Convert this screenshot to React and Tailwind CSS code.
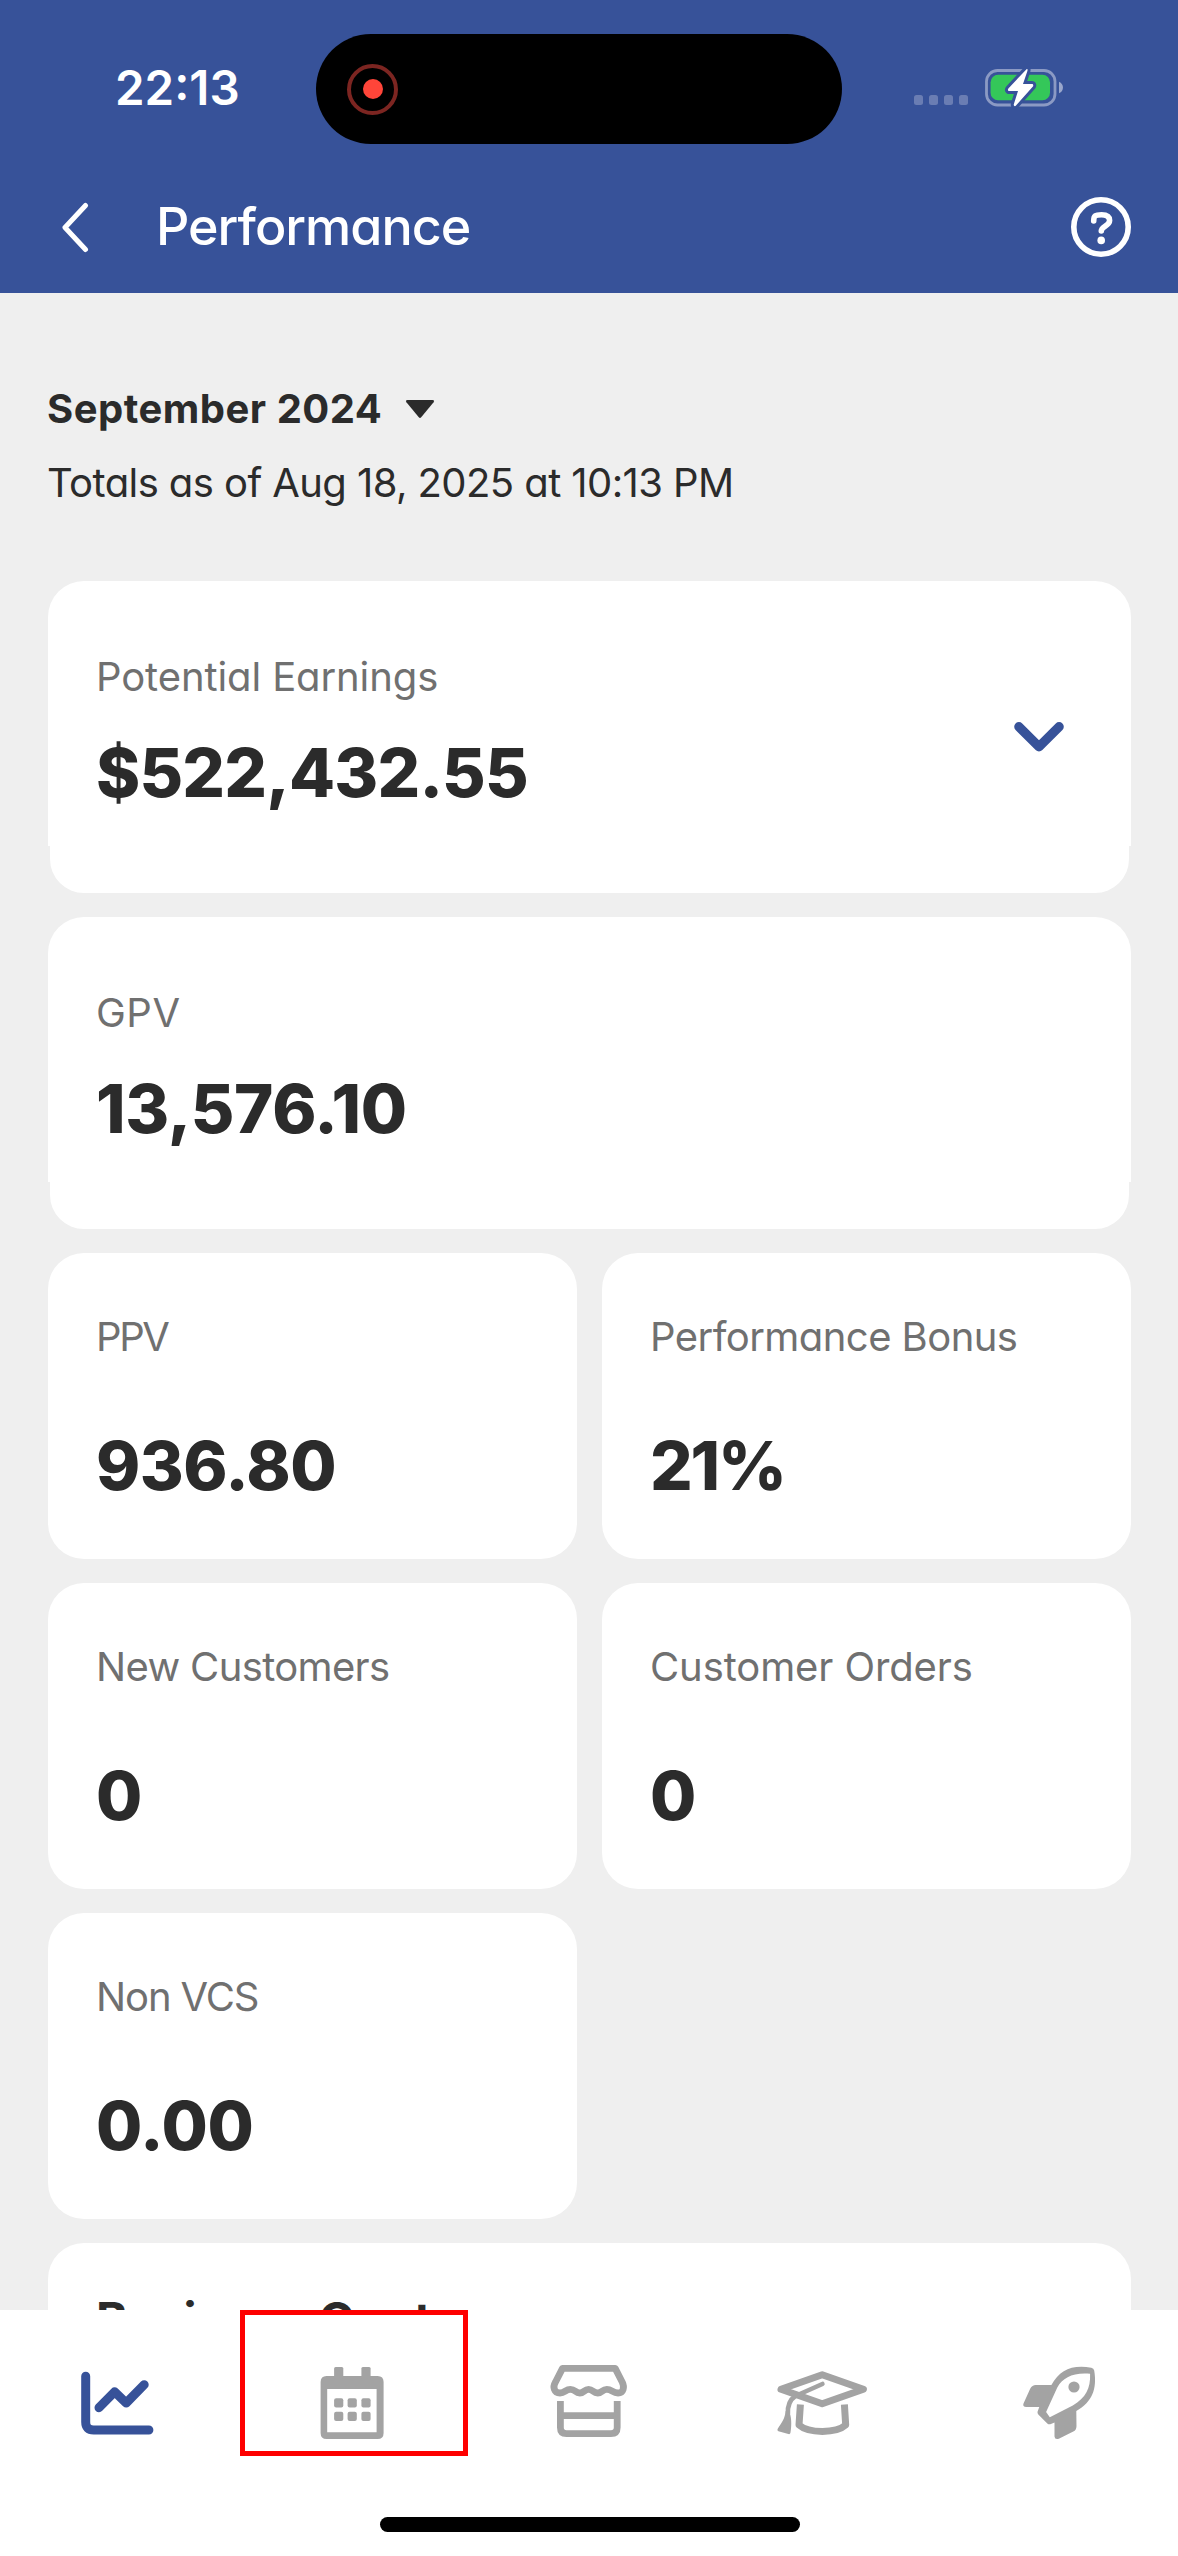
import React from "react";

function StatusBar() {
  return (
    <div className="relative h-[160px]">
      <span className="absolute left-[115px] top-[58px] text-[47.5px] leading-[60px] font-semibold">22:13</span>
      <div className="absolute left-[316px] top-[34px] flex h-[110px] w-[526px] items-center rounded-full bg-black pl-[31px]">
        <div className="flex h-[51px] w-[51px] items-center justify-center rounded-full border-4 border-[#7c2521]">
          <div className="h-[20px] w-[20px] rounded-full bg-[#ff4539]" />
        </div>
      </div>
      <div className="absolute left-[914px] top-[95px] flex gap-[5.9px]">
        {[0, 1, 2, 3].map((i) => (
          <div key={i} className="h-[10px] w-[9px] rounded-[2.5px] bg-[#6a7db3]" />
        ))}
      </div>
      <svg className="absolute left-[980px] top-[60px] h-[56px] w-[90px]" viewBox="980 60 90 56" fill="none">
        <rect x="986.5" y="70.5" width="68.5" height="34.5" rx="11" stroke="#8b9ac4" strokeWidth="2.8" />
        <rect x="990.6" y="74.8" width="59.4" height="25.4" rx="7.5" fill="#34c759" />
        <path d="M1059 81.7C1064.3 84 1064.3 91 1059 93.3Z" fill="#9aa7cc" />
        <path
          d="M1026.3 69.4L1008.6 88.2C1007.4 89.5 1007.8 91 1009.4 91H1018L1013.8 104.2C1013.4 106 1015 106.8 1016 105.6L1032.7 86.8C1033.8 85.4 1033.2 84.1 1031.8 84.1H1023L1027.4 71C1028 69 1027.2 68.4 1026.3 69.4Z"
          fill="#fff"
          stroke="#375299"
          strokeWidth="6"
          paintOrder="stroke"
          strokeLinejoin="round"
        />
      </svg>
    </div>
  );
}

function TitleBar() {
  return (
    <div className="flex h-[133px] items-center pl-[60px] pr-[45px]">
      <svg className="h-[52px] w-[30px]" viewBox="0 0 30 52" fill="none" stroke="#fff" strokeWidth="5" strokeLinecap="round" strokeLinejoin="round">
        <path d="M25.5 4.5L5 26.5L25.5 48.5" />
      </svg>
      <h1 className="ml-[66px] flex-1 text-[52px] leading-[64px] font-medium tracking-[-1px]">Performance</h1>
      <svg className="h-[64px] w-[64px]" viewBox="0 0 64 64" fill="none" stroke="#fff" strokeWidth="5.6" strokeLinecap="round" strokeLinejoin="round">
        <circle cx="32" cy="32" r="27.2" />
        <path d="M24.7 26C24.7 20.5 26.5 19.8 32.5 19.8C38.5 19.8 40.6 22 40.6 25.5C40.6 31 32.3 31 32.3 36" />
        <circle cx="32.2" cy="45.4" r="3.8" fill="#fff" stroke="none" />
      </svg>
    </div>
  );
}

function WideCard({ label, value, labelTracking, valueTracking, expandable }) {
  return (
    <section className="relative h-[312px]">
      <div className="h-[265px] rounded-t-[36px] bg-white px-12 pt-[66px]">
        <p className={`text-[40px] leading-[60px] text-[#707070] ${labelTracking}`}>{label}</p>
        <p className={`mt-[26px] text-[67px] leading-[80px] font-extrabold ${valueTracking}`}>{value}</p>
      </div>
      <div className="mx-[2px] h-[47px] rounded-b-[34px] bg-white" />
      {expandable && (
        <svg className="absolute right-[64px] top-[136px] h-[40px] w-[56px]" viewBox="0 0 56 40" fill="none" stroke="#375299" strokeWidth="9.4" strokeLinecap="round" strokeLinejoin="round">
          <path d="M7.9 9.7L28 29.8L48.1 9.7" />
        </svg>
      )}
    </section>
  );
}

function SmallCard({ label, value, labelTracking = "", valueTracking = "" }) {
  return (
    <section className="h-[306px] rounded-[36px] bg-white pl-12 pt-[54px]">
      <p className={`text-[40px] leading-[60px] text-[#707070] ${labelTracking}`}>{label}</p>
      <p className={`mt-[59px] text-[67px] leading-[80px] font-extrabold ${valueTracking}`}>{value}</p>
    </section>
  );
}

function NavIcon({ viewBox, children }) {
  return (
    <div className="flex flex-1 justify-center">
      <svg className="h-[100px] w-[100px]" viewBox={viewBox} fill="none" strokeLinecap="round" strokeLinejoin="round">
        {children}
      </svg>
    </div>
  );
}

function BottomNav() {
  return (
    <nav className="relative h-[246px] shrink-0 bg-white">
      <div className="flex pt-[45px]">
        <NavIcon viewBox="67.8 2355 100 100">
          <g stroke="#375299" strokeWidth="9">
            <path d="M85.5 2376.2V2422Q85.5 2430 93.5 2430H148.7" />
            <path d="M98.8 2407.7L114.4 2391.8L126 2403L144 2384.7" />
          </g>
        </NavIcon>
        <NavIcon viewBox="303.4 2355 100 100">
          <g fill="#a3a3a3">
            <path
              fillRule="evenodd"
              d="M327 2376H378Q384 2376 384 2382V2433Q384 2439 378 2439H327Q321 2439 321 2433V2382Q321 2376 327 2376ZM327.6 2389V2432.2H377V2389Z"
            />
            <rect x="334.5" y="2367" width="9.2" height="12" rx="1.5" />
            <rect x="361.8" y="2367" width="9.2" height="12" rx="1.5" />
            {[334.5, 348, 361.8].map((x) => (
              <React.Fragment key={x}>
                <rect x={x} y="2398.3" width="9.2" height="9.3" rx="2" />
                <rect x={x} y="2411.8" width="9.2" height="9.3" rx="2" />
              </React.Fragment>
            ))}
          </g>
        </NavIcon>
        <NavIcon viewBox="539 2355 100 100">
          <g stroke="#a3a3a3" strokeWidth="6.8">
            <path d="M562.5 2368.4H615.2L622.3 2382.2C624.6 2387 623.6 2393 618 2393C612.5 2393 612 2389.3 606.8 2389.3C602 2389.3 602.5 2393 597.7 2393C593 2393 593 2389.3 588.6 2389.3C584 2389.3 584.5 2393 579.8 2393C575 2393 575.5 2389.3 570.4 2389.3C565.5 2389.3 565 2393 560 2393C554 2393 552.5 2387 555.4 2382.2Z" />
            <path strokeLinecap="butt" d="M560.4 2401V2427.5Q560.4 2433.6 566.5 2433.6H611Q617.2 2433.6 617.2 2427.5V2401" />
            <path strokeLinecap="butt" d="M560.4 2415.7H617.2" />
          </g>
        </NavIcon>
        <NavIcon viewBox="774.6 2355 100 100">
          <g stroke="#a3a3a3" strokeWidth="7">
            <path d="M780.6 2389.3L821.8 2374.8L863 2389.3L821.8 2403.8Z" />
            <path strokeWidth="4.6" d="M822 2384L795 2396C789 2400 787 2406 787.5 2414" />
            <path strokeLinecap="butt" d="M800 2404.5L798.6 2425C808 2433.5 836 2433.5 845.3 2425L844 2404.5" />
          </g>
          <path d="M785.3 2411H788.5C791 2416 791.5 2424 790 2433Q789.5 2434.6 788 2434L778 2431.3Q776.4 2430.6 777.2 2429C781 2423 784.5 2419 785.3 2411Z" fill="#a3a3a3" />
        </NavIcon>
        <NavIcon viewBox="1010.2 2355 100 100">
          <g fill="#a3a3a3">
            <path
              fillRule="evenodd"
              d="M1091.5 2367.7Q1094 2368.2 1094.4 2370.5C1097.5 2389 1092.5 2402 1076.5 2411L1076.7 2426Q1076.7 2430 1073.5 2431.6L1059 2438.8Q1055 2440 1054.7 2436.5V2422.5L1050.5 2424.2Q1048.8 2424.6 1047.5 2423.4L1038.5 2414.4Q1037.3 2413 1037.8 2411.5L1039.5 2407H1026.5Q1022.5 2406.6 1023.7 2403.5L1030.5 2388.5Q1032.3 2385 1036 2385H1051.6C1060 2370 1072 2364.5 1091.5 2367.7ZM1090.3 2373.8C1073.5 2372.3 1063 2377.5 1057.5 2387.5L1046.3 2412L1050 2417.2L1073 2405.5C1086 2397.5 1090.8 2389 1090.3 2373.8Z"
            />
            <circle cx="1074.2" cy="2387" r="5.6" />
          </g>
        </NavIcon>
      </div>
      <div className="absolute left-[240px] top-0 h-[146px] w-[228px] border-[5px] border-[#fe0000]" />
      <div className="absolute left-[380px] top-[207px] h-[15px] w-[420px] rounded-full bg-black" />
    </nav>
  );
}

export default function App() {
  return (
    <div className="flex h-[2556px] w-[1178px] flex-col overflow-hidden bg-[#efefef] font-['Inter',sans-serif] whitespace-nowrap text-[#2b2b2b] [font-feature-settings:'cv11']">
      <header className="h-[293px] shrink-0 bg-[#375299] text-white">
        <StatusBar />
        <TitleBar />
      </header>

      <main className="h-[2017px] shrink-0 overflow-hidden pl-12 pr-[47px] pt-[86px]">
        <div className="flex h-[60px] items-center">
          <h2 className="-ml-px text-[40px] leading-[60px] font-bold tracking-[0.5px]">September 2024</h2>
          <svg className="ml-[23px] h-[20px] w-[30px]" viewBox="0 0 30 20" fill="#2b2b2b">
            <path d="M2.5 1H27.5Q30 1.2 28.6 3.2L16.2 18.3Q15 19.6 13.8 18.3L1.4 3.2Q0 1.2 2.5 1Z" />
          </svg>
        </div>
        <p className="-ml-px mt-[14px] text-[40px] leading-[60px] tracking-[-0.58px]">Totals as of Aug 18, 2025 at 10:13 PM</p>

        <div className="mt-[68px] flex flex-col gap-6">
          <WideCard label="Potential Earnings" value="$522,432.55" labelTracking="tracking-[-0.1px]" valueTracking="tracking-[-0.8px]" expandable />
          <WideCard label="GPV" value="13,576.10" labelTracking="tracking-[0.5px]" valueTracking="tracking-[-0.3px]" />
          <div className="grid grid-cols-2 gap-6 gap-x-[25px]">
            <SmallCard label="PPV" value="936.80" labelTracking="tracking-[-2.4px]" valueTracking="tracking-[-0.5px]" />
            <SmallCard label="Performance Bonus" value="21%" labelTracking="tracking-[-0.55px]" valueTracking="tracking-[-2.2px]" />
            <SmallCard label="New Customers" value="0" labelTracking="tracking-[-0.65px]" />
            <SmallCard label="Customer Orders" value="0" labelTracking="tracking-[-0.1px]" />
            <SmallCard label="Non VCS" value="0.00" labelTracking="tracking-[-1.1px]" valueTracking="tracking-[-0.2px]" />
          </div>
          <section className="h-[306px] rounded-[36px] bg-white pl-12 pt-[47px]">
            <h3 className="text-[48px] leading-[60px] font-bold tracking-[-0.3px]">Business Quota</h3>
          </section>
        </div>
      </main>

      <BottomNav />
    </div>
  );
}
